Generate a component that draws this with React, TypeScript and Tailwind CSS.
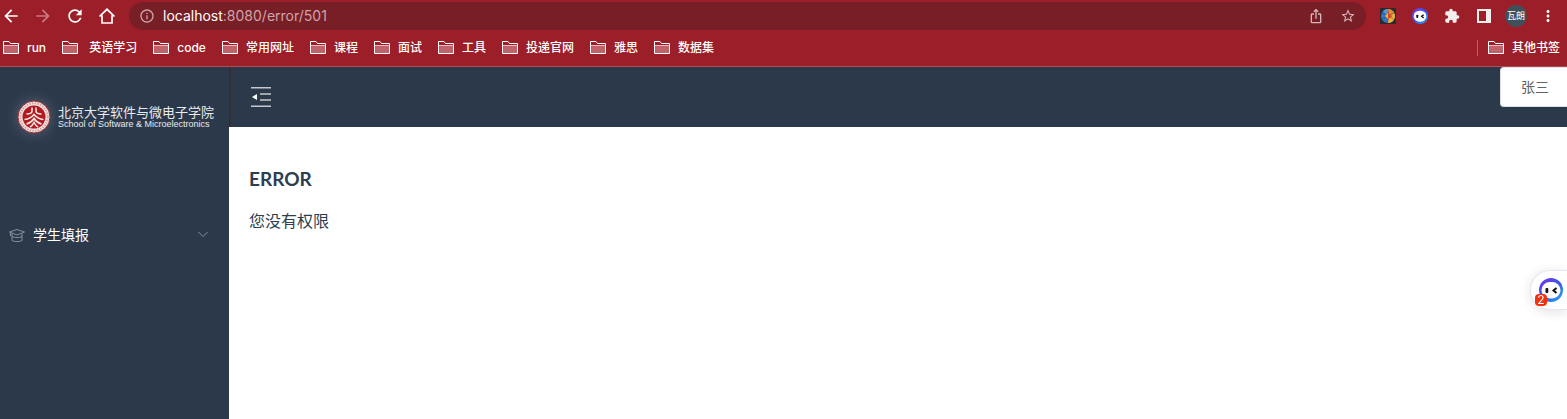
import React from "react";
import {
  MdArrowBack,
  MdArrowForward,
  MdExtension,
  MdInfoOutline,
  MdIosShare,
  MdMoreVert,
  MdRefresh,
  MdStarOutline,
} from "react-icons/md";

const bookmarks = ["run", " 英语学习", "code", "常用网址", "课程", "面试", "工具", "投递官网", "雅思", "数据集"];

function FolderIcon() {
  return (
    <svg width="16" height="14" viewBox="0 0 16 14" className="shrink-0" aria-hidden="true">
      <path d="M1 5h14v7.500H1z" fill="#c0636b" />
      <path d="M1 4.500h14" stroke="#e6bdc0" />
      <path d="M.5 12.500V.5H6l1.500 2h8v10z" fill="none" stroke="#fff" />
    </svg>
  );
}

function Bookmark({ label }: { label: string }) {
  return (
    <a href="#" className="flex shrink-0 items-center gap-2 whitespace-pre text-xs font-medium text-white">
      <FolderIcon />
      {label}
    </a>
  );
}

function HomeIcon() {
  return (
    <svg width="18" height="18" viewBox="0 0 18 18" fill="none" stroke="#fff" strokeWidth="1.700" aria-hidden="true">
      <path d="M1.500 9.500 9 2.300l7.500 7.200M4 8.200V16h10V8.200" />
    </svg>
  );
}

function PinwheelIcon() {
  return (
    <svg width="16" height="16" viewBox="0 0 16 16" aria-hidden="true">
      <path d="M0 0h16v16H0z" fill="#2c2a2c" />
      <circle cx="8" cy="8" r="7" fill="#3177c4" />
      <path d="M8 1a7 7 0 0 1 6.500 4.500L8 8z" fill="#ec8a2c" />
      <path d="M14.500 5.500A7 7 0 0 1 8 15V8z" fill="#f2b632" />
      <path d="M8 1v7L3 3a7 7 0 0 1 5-2z" fill="#559bdc" />
      <path d="M8 2v12M2.500 5l11 6M2.500 11l11-6" stroke="#33405c" strokeWidth=".5" />
      <path d="M8 3.500 10 7l3 1-3 1.500L8 12z" fill="#e5402c" />
      <path d="m8 5-3 3 3 3z" fill="#f2b632" />
    </svg>
  );
}

function BotIcon({ size, id }: { size: number; id: string }) {
  return (
    <svg width={size} height={size} viewBox="0 0 24 24" className="shrink-0" aria-hidden="true">
      <defs>
        <linearGradient id={id} x1="0" y1="0" x2="1" y2="1">
          <stop offset="0" stopColor="#7a35e8" />
          <stop offset=".5" stopColor="#3f52ec" />
          <stop offset="1" stopColor="#18b4ee" />
        </linearGradient>
      </defs>
      <circle cx="12" cy="12" r="12" fill={`url(#${id})`} />
      <rect x="2.500" y="4" width="19" height="16.500" rx="8.250" fill="#fff" />
      <rect x="6.500" y="10" width="2.800" height="5" rx="1" fill="#111" />
      <path d="m17.500 10-3 2.500 3 2.500" fill="none" stroke="#111" strokeWidth="2" />
    </svg>
  );
}

function SealIcon() {
  return (
    <svg width="34" height="34" viewBox="0 0 34 34" className="shrink-0 drop-shadow-[0_0_7px_rgba(255,255,255,0.22)]" aria-hidden="true">
      <circle cx="17" cy="17" r="16" fill="#eee4e3" stroke="#a82c31" />
      <circle cx="17" cy="17" r="13.700" fill="none" stroke="#d3a3a3" strokeWidth="2" strokeDasharray="1.500 1.200" />
      <circle cx="17" cy="17" r="11.500" fill="#b3191f" />
      <g fill="none" stroke="#f5e6e3" strokeWidth="1.600">
        <path d="M15 7.500V11c0 2-2 3-5.500 3M19 7.500V11c0 2 2 3 5.500 3M7.500 19.500c4-.5 7.500-2.500 9.500-5 2 2.500 5.500 4.500 9.500 5M9.500 24c3.500-1 6-3 7.500-5.500 1.500 2.500 4 4.500 7.500 5.500M13 27c2-1.200 3-2.500 4-4.500 1 2 2 3.300 4 4.500" />
      </g>
    </svg>
  );
}

function BrowserBar() {
  return (
    <div className="border-b border-[#b64b54] bg-[#9c1e28] text-white">
      <div className="flex h-8 items-center">
        <div className="flex items-center gap-3 pl-px">
          <button aria-label="Back"><MdArrowBack size={20} /></button>
          <button aria-label="Forward" className="text-[#c97b81]"><MdArrowForward size={20} /></button>
          <button aria-label="Reload"><MdRefresh size={20} /></button>
          <button aria-label="Home" className="px-px"><HomeIcon /></button>
        </div>
        <div className="ml-3 flex h-7 flex-1 items-center rounded-full bg-[#771e26] px-2.5">
          <MdInfoOutline size={16} className="text-[#c8a5a8]" />
          <a href="#" className="ml-2 text-sm text-[#d0a4a8]">
            <span className="text-white">localhost</span>:8080/error/501
          </a>
          <div className="ml-auto flex items-center gap-4 text-[#d6b5b8]">
            <button aria-label="Share"><MdIosShare size={16} /></button>
            <button aria-label="Bookmark this page"><MdStarOutline size={16} /></button>
          </div>
        </div>
        <div className="ml-3.5 flex items-center gap-4 pr-2.5">
          <button aria-label="Pinwheel"><PinwheelIcon /></button>
          <button aria-label="Assistant"><BotIcon size={16} id="bot-small" /></button>
          <button aria-label="Extensions"><MdExtension size={16} className="text-[#f3eeee]" /></button>
          <button aria-label="Side panel" className="px-px">
            <svg width="14" height="14" viewBox="0 0 14 14" aria-hidden="true">
              <path fill="#f3eeee" fillRule="evenodd" d="M0 0h14v14H0zM2 2v10h7V2z" />
            </svg>
          </button>
          <button className="-ml-[3px] size-[22px] rounded-full bg-[#405059] text-[9px]">瓦朗</button>
          <button aria-label="Menu" className="-ml-1"><MdMoreVert size={18} /></button>
        </div>
      </div>
      <nav className="flex h-[34px] items-start gap-4 overflow-hidden pt-2 pr-[7px] pl-[3px]">
        {bookmarks.map((b) => (
          <Bookmark key={b} label={b} />
        ))}
        <div className="ml-auto border-l border-[#b9616a] pl-2.5">
          <Bookmark label="其他书签" />
        </div>
      </nav>
    </div>
  );
}

function Sidebar() {
  return (
    <aside className="w-[229px] shrink-0 bg-[#2c394b]">
      <div className="flex h-[100px] items-center gap-[7px] pl-[17px]">
        <SealIcon />
        <div className="whitespace-nowrap text-[#e8ebef]">
          <div className="text-[13px] leading-[14px]">北京大学软件与微电子学院</div>
          <div className="font-['Liberation_Sans',sans-serif] text-[9px] leading-[10px]">School of Software &amp; Microelectronics</div>
        </div>
      </div>
      <button className="mt-10 flex h-14 w-full items-center gap-2 pr-5 pl-[9px] text-sm text-white">
        <svg width="16" height="16" viewBox="0 0 16 16" fill="none" stroke="#87909d" aria-hidden="true">
          <path d="M.5 5 8 2.500 15.500 5 8 8zM3 6.500v7c3 1.500 7 1.500 10 0v-7M3 9.500c3 1.500 7 1.500 10 0M1.500 5.500V9" />
        </svg>
        学生填报
        <svg width="12" height="12" viewBox="0 0 12 12" fill="none" stroke="#87909d" className="ml-auto" aria-hidden="true">
          <path d="m1.500 3 4.500 4.500L10.500 3" />
        </svg>
      </button>
    </aside>
  );
}

export default function App() {
  return (
    <div className="flex min-h-screen flex-col bg-white font-[Inter,'Noto_Sans_CJK_SC',sans-serif]">
      <BrowserBar />
      <div className="flex flex-1">
        <Sidebar />
        <div className="flex min-w-0 flex-1 flex-col">
          <header className="flex h-[60px] items-start justify-between border-l-2 border-[#302f33] bg-[#2c394b]">
            <button aria-label="Collapse menu" className="self-center pl-5">
              <svg width="20" height="20" viewBox="0 0 20 20" aria-hidden="true">
                <path d="M0 .700h20M9 7h11M9 13h11M0 19.300h20" stroke="#c4c9cf" strokeWidth="1.400" />
                <path d="m1 10 5-3v6z" fill="#fff" />
              </svg>
            </button>
            <button className="h-10 w-[67px] rounded-l border border-r-0 border-[#dcdfe6] bg-white pl-5 text-left text-sm text-[#606266]">
              张三
            </button>
          </header>
          <main className="px-5 pt-10 text-[#2c3e50]">
            <h3 className="font-[Lato,sans-serif] text-[19px] leading-6 font-bold">ERROR</h3>
            <p className="mt-[18px] text-base leading-6">您没有权限</p>
          </main>
        </div>
      </div>
      <button aria-label="Open assistant, 2 messages" className="fixed top-[270px] right-0 flex h-10 w-[37px] items-center rounded-l-full border border-r-0 border-[#e6e6f0] bg-white pl-2 shadow-[0_2px_12px_rgba(0,0,0,0.12)]">
        <BotIcon size={24} id="bot-large" />
        <span className="absolute bottom-[3px] left-1 size-3 rounded-[4px] bg-[#f5300f] text-center text-xs leading-3 text-white">2</span>
      </button>
    </div>
  );
}
